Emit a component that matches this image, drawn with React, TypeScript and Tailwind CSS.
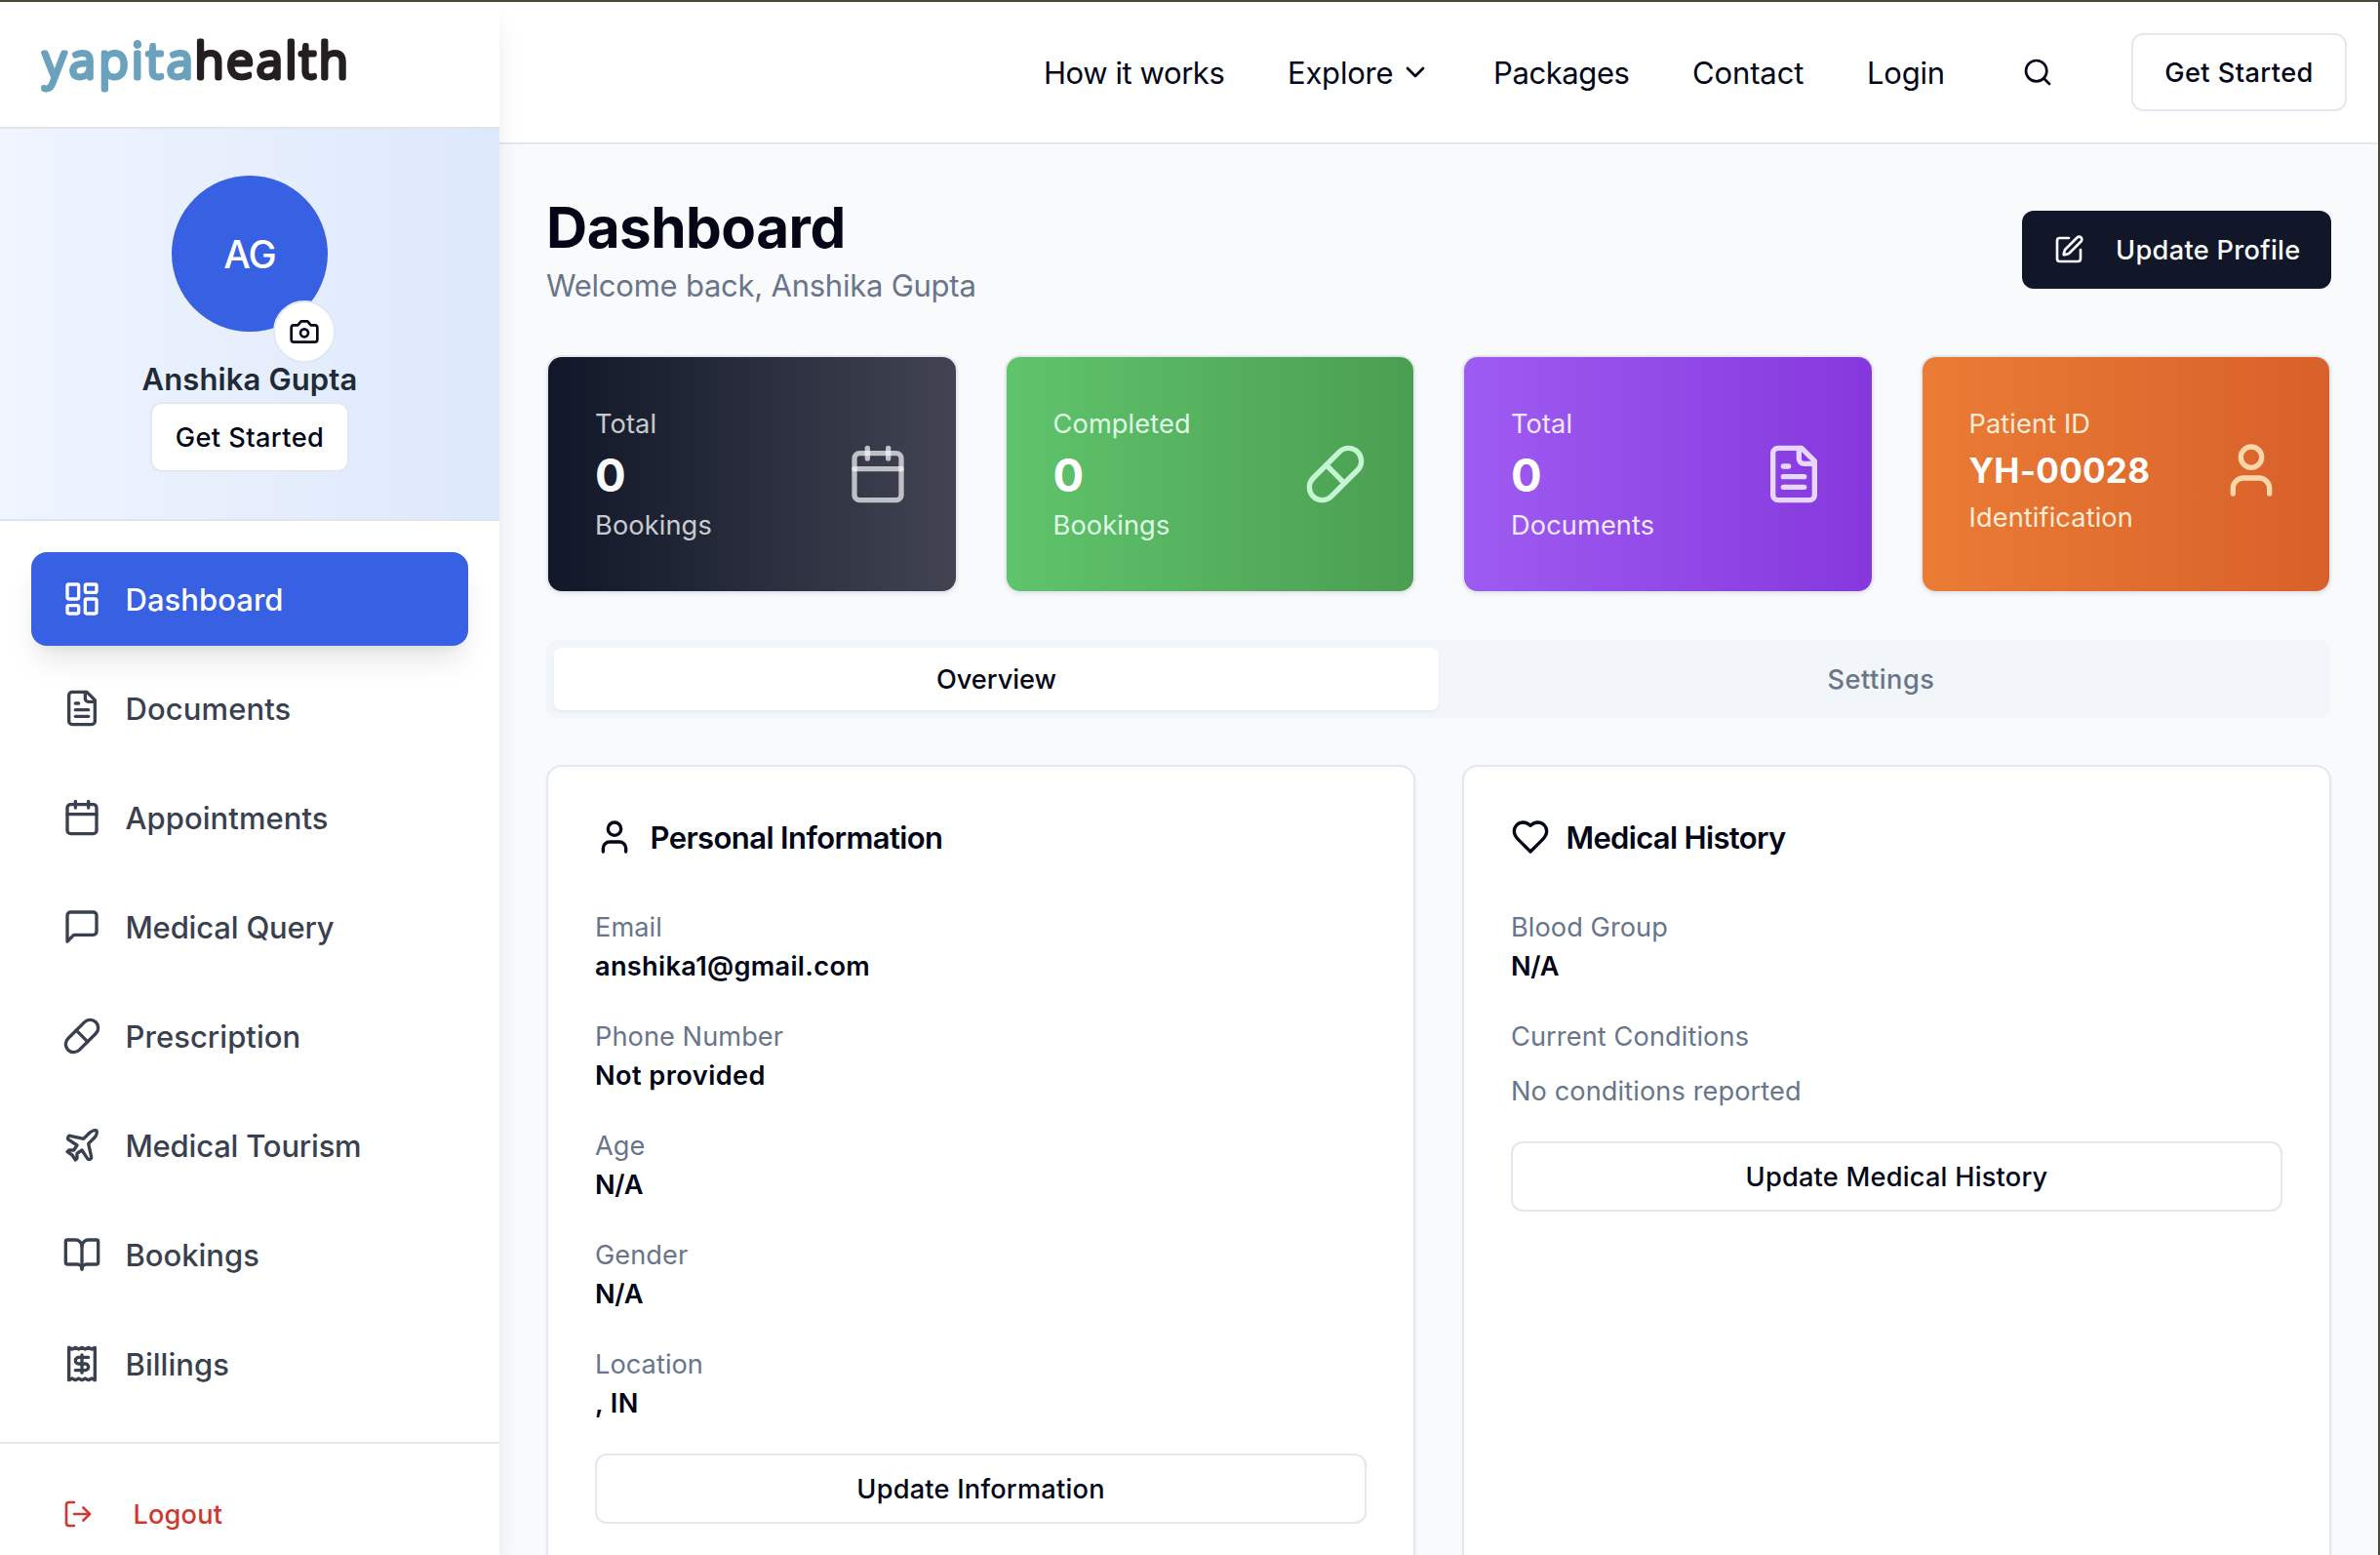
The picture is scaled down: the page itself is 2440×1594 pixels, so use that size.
import type { ReactNode } from "react";

type IconProps = { className?: string };

function Glyph({ className = "", children }: { className?: string; children: ReactNode }) {
  return (
    <svg
      viewBox="0 0 24 24"
      fill="none"
      stroke="currentColor"
      strokeWidth="2"
      strokeLinecap="round"
      strokeLinejoin="round"
      className={`shrink-0 ${className}`}
    >
      {children}
    </svg>
  );
}

const GridIcon = (p: IconProps) => (
  <Glyph {...p}>
    <rect width="7" height="9" x="3" y="3" rx="1" />
    <rect width="7" height="5" x="14" y="3" rx="1" />
    <rect width="7" height="9" x="14" y="12" rx="1" />
    <rect width="7" height="5" x="3" y="16" rx="1" />
  </Glyph>
);
const FileIcon = (p: IconProps) => (
  <Glyph {...p}>
    <path d="M15 2H6a2 2 0 0 0-2 2v16a2 2 0 0 0 2 2h12a2 2 0 0 0 2-2V7Z" />
    <path d="M14 2v4a2 2 0 0 0 2 2h4" />
    <path d="M10 9H8" />
    <path d="M16 13H8" />
    <path d="M16 17H8" />
  </Glyph>
);
const CalendarIcon = (p: IconProps) => (
  <Glyph {...p}>
    <path d="M8 2v4" />
    <path d="M16 2v4" />
    <rect width="18" height="18" x="3" y="4" rx="2" />
    <path d="M3 10h18" />
  </Glyph>
);
const MessageIcon = (p: IconProps) => (
  <Glyph {...p}>
    <path d="M21 15a2 2 0 0 1-2 2H7l-4 4V5a2 2 0 0 1 2-2h14a2 2 0 0 1 2 2z" />
  </Glyph>
);
const PillIcon = (p: IconProps) => (
  <Glyph {...p}>
    <path d="m10.5 20.5 10-10a4.95 4.95 0 1 0-7-7l-10 10a4.95 4.95 0 1 0 7 7Z" />
    <path d="m8.5 8.5 7 7" />
  </Glyph>
);
const PlaneIcon = (p: IconProps) => (
  <Glyph {...p}>
    <path d="M17.8 19.2 16 11l3.5-3.5C21 6 21.5 4 21 3c-1-.5-3 0-4.5 1.5L13 8 4.8 6.2c-.5-.1-.9.1-1.1.5l-.3.5c-.2.5-.1 1 .3 1.3L9 12l-2 3H4l-1 1 3 2 2 3 1-1v-3l3-2 3.5 5.3c.3.4.8.5 1.3.3l.5-.2c.4-.3.6-.7.5-1.2z" />
  </Glyph>
);
const BookIcon = (p: IconProps) => (
  <Glyph {...p}>
    <path d="M12 7v14" />
    <path d="M3 18a1 1 0 0 1-1-1V4a1 1 0 0 1 1-1h5a4 4 0 0 1 4 4 4 4 0 0 1 4-4h5a1 1 0 0 1 1 1v13a1 1 0 0 1-1 1h-6a3 3 0 0 0-3 3 3 3 0 0 0-3-3z" />
  </Glyph>
);
const ReceiptIcon = (p: IconProps) => (
  <Glyph {...p}>
    <path d="M4 2v20l2-1 2 1 2-1 2 1 2-1 2 1 2-1 2 1V2l-2 1-2-1-2 1-2-1-2 1-2-1-2 1Z" />
    <path d="M16 8h-6a2 2 0 1 0 0 4h4a2 2 0 1 1 0 4H8" />
    <path d="M12 17.5v-11" />
  </Glyph>
);
const CameraIcon = (p: IconProps) => (
  <Glyph {...p}>
    <path d="M14.5 4h-5L7 7H4a2 2 0 0 0-2 2v9a2 2 0 0 0 2 2h16a2 2 0 0 0 2-2V9a2 2 0 0 0-2-2h-3l-2.5-3z" />
    <circle cx="12" cy="13" r="3" />
  </Glyph>
);
const UserIcon = (p: IconProps) => (
  <Glyph {...p}>
    <path d="M19 21v-2a4 4 0 0 0-4-4H9a4 4 0 0 0-4 4v2" />
    <circle cx="12" cy="7" r="4" />
  </Glyph>
);
const HeartIcon = (p: IconProps) => (
  <Glyph {...p}>
    <path d="M19 14c1.49-1.46 3-3.21 3-5.5A5.5 5.5 0 0 0 16.5 3c-1.76 0-3 .5-4.5 2-1.5-1.5-2.74-2-4.5-2A5.5 5.5 0 0 0 2 8.5c0 2.3 1.5 4.05 3 5.5l7 7Z" />
  </Glyph>
);
const PenIcon = (p: IconProps) => (
  <Glyph {...p}>
    <path d="M12 3H5a2 2 0 0 0-2 2v14a2 2 0 0 0 2 2h14a2 2 0 0 0 2-2v-7" />
    <path d="M18.375 2.625a1 1 0 0 1 3 3l-9.013 9.014a2 2 0 0 1-.853.505l-2.873.84a.5.5 0 0 1-.62-.62l.84-2.873a2 2 0 0 1 .506-.852z" />
  </Glyph>
);
const LogoutIcon = (p: IconProps) => (
  <Glyph {...p}>
    <path d="M9 21H5a2 2 0 0 1-2-2V5a2 2 0 0 1 2-2h4" />
    <path d="m16 17 5-5-5-5" />
    <path d="M21 12H9" />
  </Glyph>
);
const SearchIcon = (p: IconProps) => (
  <Glyph {...p}>
    <circle cx="11" cy="11" r="8" />
    <path d="m21 21-4.3-4.3" />
  </Glyph>
);
const ChevronIcon = (p: IconProps) => (
  <Glyph {...p}>
    <path d="m6 9 6 6 6-6" />
  </Glyph>
);

const navItems = [
  { label: "Dashboard", Icon: GridIcon, tracking: "tracking-[0.04px]", active: true },
  { label: "Documents", Icon: FileIcon, tracking: "tracking-[0.1px]" },
  { label: "Appointments", Icon: CalendarIcon, tracking: "tracking-[0.05px]" },
  { label: "Medical Query", Icon: MessageIcon, tracking: "tracking-[-0.18px]" },
  { label: "Prescription", Icon: PillIcon, tracking: "tracking-[0.05px]" },
  { label: "Medical Tourism", Icon: PlaneIcon, tracking: "tracking-[-0.2px]" },
  { label: "Bookings", Icon: BookIcon, tracking: "tracking-[-0.02px]" },
  { label: "Billings", Icon: ReceiptIcon, tracking: "tracking-[0.04px]" },
];

function Logo() {
  return (
    <svg width="330" height="90" viewBox="0 0 330 90" className="overflow-visible">
      <g
        fontFamily="'Open Sans', sans-serif"
        fontWeight="300"
        fontSize="49.5"
        strokeWidth="4.8"
        strokeLinejoin="round"
        strokeLinecap="round"
      >
        <text x="12.5" y="57.5" textLength="153" lengthAdjust="spacing" fill="#6aa2bd" stroke="#6aa2bd">
          yapita
        </text>
        <text x="168" y="57.5" textLength="156.5" lengthAdjust="spacing" fill="#231f20" stroke="#231f20">
          health
        </text>
      </g>
    </svg>
  );
}

function Sidebar() {
  return (
    <aside className="relative z-10 flex w-[512px] shrink-0 flex-col bg-white shadow-[0_20px_30px_-6px_rgba(0,0,0,0.1),0_8px_12px_-8px_rgba(0,0,0,0.1)]">
      <div className="h-[130px] shrink-0 border-b-2 border-[#e2e6ec] pl-8 pt-5">
        <Logo />
      </div>
      <div className="flex h-[402px] shrink-0 flex-col items-center border-b-2 border-[#dfe5ee] bg-linear-to-r from-[#f0f5ff] to-[#dde8fb] pt-12">
        <div className="relative flex size-40 items-center justify-center rounded-full bg-[#3860e2] pt-0.5 text-[39px] font-[450] tracking-[-1px] text-white">
          AG
          <div className="absolute -bottom-8 -right-2 flex size-16 items-center justify-center rounded-full border-2 border-[#e2e8f0] bg-white text-[#020617]">
            <CameraIcon className="size-8" />
          </div>
        </div>
        <div className="-mb-px mt-[25px] text-[31px] font-semibold leading-[48px] tracking-[0.13px] text-[#212b38]">
          Anshika Gupta
        </div>
        <button className="flex h-[72px] w-[204px] items-center justify-center rounded-xl border-2 border-[#e2e8f0] bg-white pt-0.5 text-[27.2px] font-[540] tracking-[0.42px]">
          Get Started
        </button>
      </div>
      <nav className="flex shrink-0 flex-col gap-4 p-8">
        {navItems.map(({ label, Icon, tracking, active }) => (
          <a
            key={label}
            className={`flex h-24 items-center gap-6 rounded-2xl px-8 text-[31px] font-[530] ${tracking} ${
              active
                ? "bg-[#3860e2] text-white shadow-[0_20px_30px_-6px_rgba(0,0,0,0.1),0_8px_12px_-8px_rgba(0,0,0,0.1)]"
                : "text-[#394150]"
            }`}
          >
            <Icon className="size-10" />
            <span className="whitespace-nowrap pl-[0.5px] pt-0.5">{label}</span>
          </a>
        ))}
      </nav>
      <div className="border-t-2 border-[#e2e8f0] p-8">
        <button className="flex h-20 w-full items-center gap-10 px-8 text-[27.2px] font-[530] tracking-[0.15px] text-[#ce3a31]">
          <LogoutIcon className="size-8" />
          <span className="pl-[0.5px] pt-0.5">Logout</span>
        </button>
      </div>
    </aside>
  );
}

function Header() {
  return (
    <header className="flex h-[146px] shrink-0 items-center justify-end border-b-2 border-[#e2e8f0] bg-white pr-8 text-[31px] font-[430]">
      <div className="flex gap-16 whitespace-nowrap pt-0.5">
        <a className="w-[186px] tracking-[-0.42px]">How it works</a>
        <a className="flex w-[147px] items-center justify-between tracking-[-0.22px]">
          Explore
          <ChevronIcon className="-mt-0.5 size-8" />
        </a>
        <a className="w-[140px] tracking-[-0.4px]">Packages</a>
        <a className="w-[115px] tracking-[-0.12px]">Contact</a>
        <a className="w-[80px] tracking-[-0.24px]">Login</a>
      </div>
      <button className="ml-[55px] flex size-20 items-center justify-center">
        <SearchIcon className="size-8" />
      </button>
      <button className="ml-[56px] flex h-20 w-[221px] items-center justify-center rounded-xl border-2 border-[#e2e8f0] pt-0.5 text-[27.2px] font-[540] tracking-[0.42px]">
        Get Started
      </button>
    </header>
  );
}

const stats = [
  {
    top: "Total",
    value: "0",
    bottom: "Bookings",
    Icon: CalendarIcon,
    card: "from-[#111728] to-[#424452]",
    valueClass: "text-[47px] leading-[64px] text-[#f8fafc]",
    text: "text-[#f8fafc]/80",
    icon: "text-[#f8fafc]/70",
  },
  {
    top: "Completed",
    value: "0",
    bottom: "Bookings",
    Icon: PillIcon,
    card: "from-[#60c46c] to-[#4b9e51]",
    valueClass: "text-[47px] leading-[64px] text-white",
    text: "text-[#dffbe7]",
    icon: "text-[#c5f6d3]",
  },
  {
    top: "Total",
    value: "0",
    bottom: "Documents",
    Icon: FileIcon,
    card: "from-[#9e5bf1] to-[#8637dd]",
    valueClass: "text-[47px] leading-[64px] text-white",
    text: "text-[#f2e8fe]",
    icon: "text-[#e7d6fd]",
  },
  {
    top: "Patient ID",
    value: "YH-00028",
    bottom: "Identification",
    Icon: UserIcon,
    card: "from-[#ea7c35] to-[#d8602a]",
    valueClass: "-mt-px mb-px text-[35px] leading-[56px] tracking-[0.24px] text-white",
    text: "text-[#fcecd6]",
    icon: "text-[#f8d7ab]",
  },
];

function StatCards() {
  return (
    <div className="mt-12 grid grid-cols-4 gap-12">
      {stats.map(({ top, value, bottom, Icon, card, valueClass, text, icon }, i) => (
        <div key={i} className="h-[244px] rounded-2xl border-2 border-[#e2e8f0] bg-[#e2e8f0] shadow-[0_2px_4px_rgba(0,0,0,0.05)]">
          <div className={`flex h-full items-start justify-between rounded-[14px] bg-linear-to-r p-12 ${card}`}>
            <div className={`pt-px text-[27.2px] font-[430] leading-[40px] tracking-[0.11px] ${text}`}>
              <div>{top}</div>
              <div className={`font-bold ${valueClass}`}>{value}</div>
              <div>{bottom}</div>
            </div>
            <div className="flex h-full items-center">
              <Icon className={`size-16 ${i === 3 ? "-mt-2" : ""} ${icon}`} />
            </div>
          </div>
        </div>
      ))}
    </div>
  );
}

function Field({ label, value, tracking = "tracking-[-0.3px]" }: { label: string; value: string; tracking?: string }) {
  return (
    <div className="-mb-px pt-px text-[27.2px] leading-[40px]">
      <div className="font-[430] tracking-[0.05px] text-[#68758a]">{label}</div>
      <div className={`font-semibold ${tracking}`}>{value}</div>
    </div>
  );
}

function Panel({ icon, title, tracking, children }: { icon: ReactNode; title: string; tracking: string; children: ReactNode }) {
  return (
    <section className="h-[880px] rounded-2xl border-2 border-[#e2e8f0] bg-white p-12 shadow-[0_2px_4px_rgba(0,0,0,0.05)]">
      <h2 className={`flex h-12 items-center gap-4 text-[31px] font-semibold ${tracking}`}>
        {icon}
        <span className="pl-[0.5px] pt-0.5">{title}</span>
      </h2>
      <div className="mt-12 flex flex-col gap-8">{children}</div>
    </section>
  );
}

function OutlineButton({ children }: { children: ReactNode }) {
  return (
    <button className="flex h-[72px] w-full items-center justify-center rounded-xl border-2 border-[#e2e8f0] bg-white pt-0.5 text-[27.2px] font-[540] tracking-[0.22px]">
      {children}
    </button>
  );
}

export default function App() {
  return (
    <div className="flex h-[1594px] w-[2440px] overflow-hidden border-r-2 border-t-2 border-[#4c473b] bg-[#f9fafc] font-['Inter',sans-serif] text-[#020617]">
      <Sidebar />
      <div className="flex min-w-0 flex-1 flex-col">
        <Header />
        <main className="px-12 pt-12">
          <div className="flex items-center justify-between">
            <div>
              <h1 className="-mb-px pt-px text-[58.4px] font-bold leading-[72px] tracking-[-0.52px]">Dashboard</h1>
              <p className="-mb-px pt-px text-[31px] font-[430] leading-[48px] tracking-[-0.24px] text-[#68758a]">
                Welcome back, Anshika Gupta
              </p>
            </div>
            <button className="flex h-20 w-[317px] items-center gap-8 rounded-xl bg-[#111728] pl-8 text-[27.2px] font-[540] tracking-[0.3px] text-[#f8fafc]">
              <PenIcon className="size-8" />
              <span className="pt-0.5">Update Profile</span>
            </button>
          </div>
          <StatCards />
          <div className="mt-12 grid h-20 grid-cols-2 rounded-xl bg-[#f2f5f9] p-2 text-[27.2px] font-[540]">
            <div className="flex items-center justify-center rounded-lg bg-white pt-0.5 tracking-[-0.05px] shadow-[0_2px_4px_rgba(0,0,0,0.05)]">
              Overview
            </div>
            <div className="flex items-center justify-center pt-0.5 tracking-[0.48px] text-[#68758a]">Settings</div>
          </div>
          <div className="mt-12 grid grid-cols-2 gap-12">
            <Panel icon={<UserIcon className="size-10" />} title="Personal Information" tracking="tracking-[-0.6px]">
              <Field label="Email" value="anshika1@gmail.com" tracking="tracking-[0.31px]" />
              <Field label="Phone Number" value="Not provided" tracking="tracking-[0.42px]" />
              <Field label="Age" value="N/A" />
              <Field label="Gender" value="N/A" />
              <Field label="Location" value=", IN" tracking="tracking-[0.38px]" />
              <OutlineButton>Update Information</OutlineButton>
            </Panel>
            <Panel icon={<HeartIcon className="size-10" />} title="Medical History" tracking="tracking-[-0.68px]">
              <Field label="Blood Group" value="N/A" />
              <div className="-mb-px flex flex-col gap-4 pt-px text-[27.2px] font-[430] leading-[40px] tracking-[0.09px] text-[#68758a]">
                <div>Current Conditions</div>
                <div>No conditions reported</div>
              </div>
              <OutlineButton>Update Medical History</OutlineButton>
            </Panel>
          </div>
        </main>
      </div>
    </div>
  );
}
